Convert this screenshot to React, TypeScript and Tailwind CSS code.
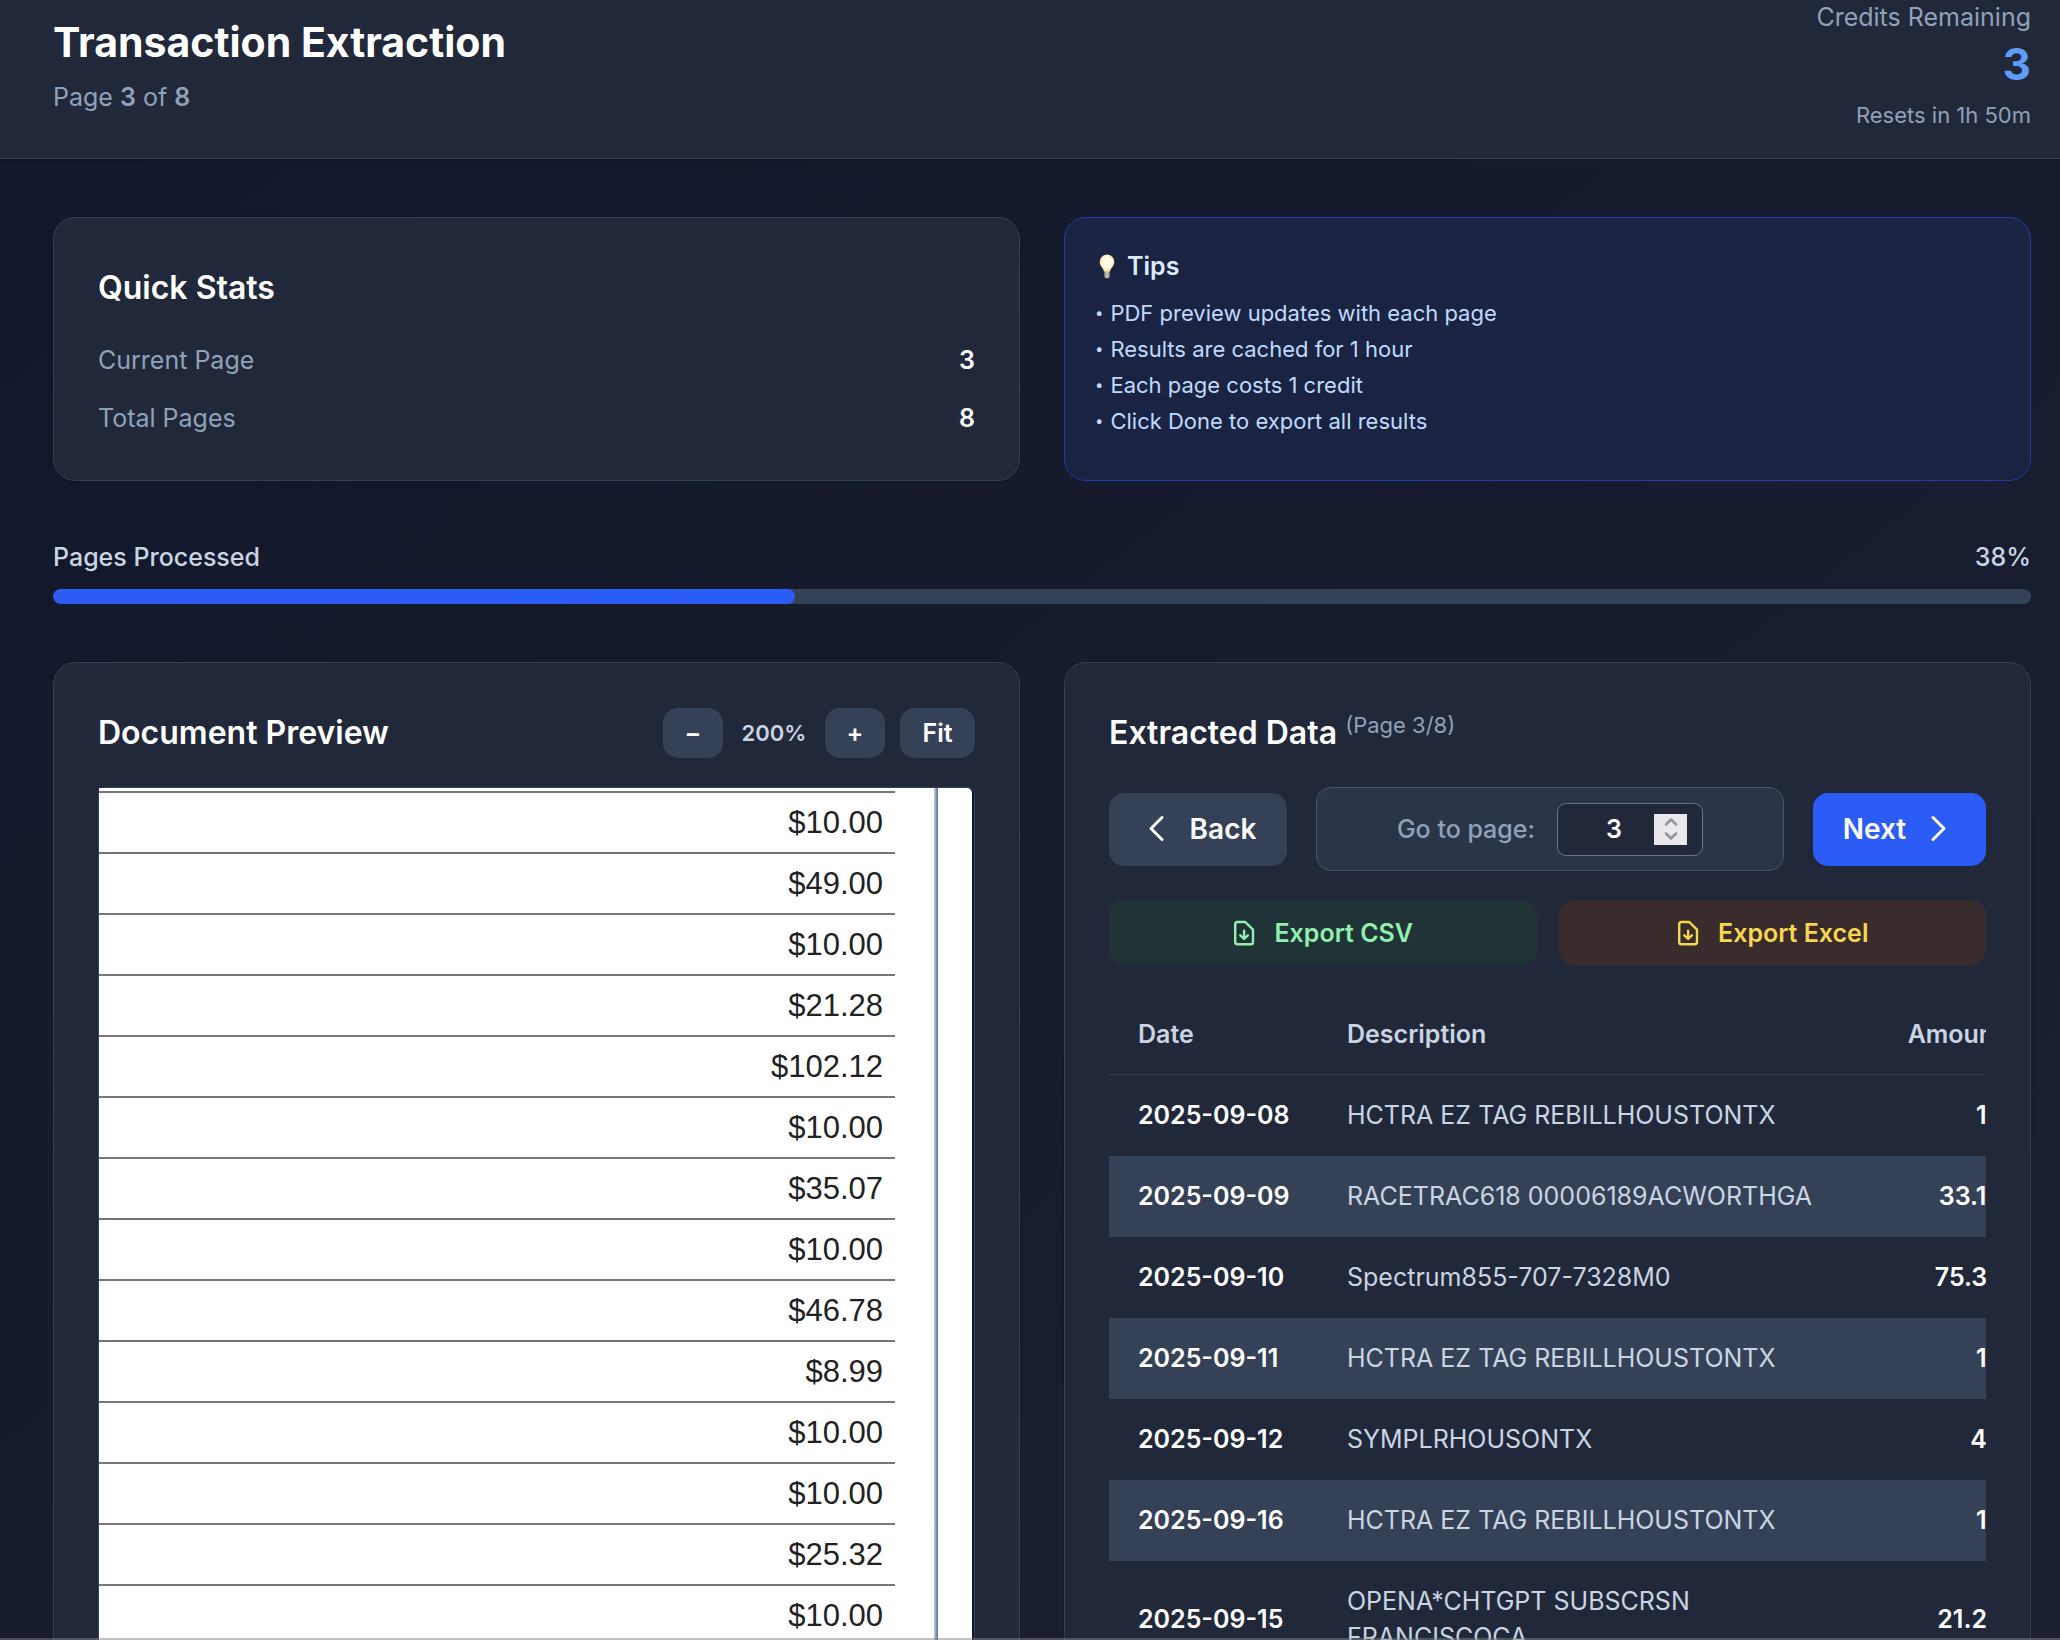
import { ReactNode } from "react";

const amounts = ["$10.00","$49.00","$10.00","$21.28","$102.12","$10.00","$35.07","$10.00","$46.78","$8.99","$10.00","$10.00","$25.32","$10.00"];

const rows = [
  { date: "2025-09-08", description: "HCTRA EZ TAG REBILLHOUSTONTX", amount: "10" },
  { date: "2025-09-09", description: "RACETRAC618 00006189ACWORTHGA", amount: "33.14" },
  { date: "2025-09-10", description: "Spectrum855-707-7328M0", amount: "75.35" },
  { date: "2025-09-11", description: "HCTRA EZ TAG REBILLHOUSTONTX", amount: "10" },
  { date: "2025-09-12", description: "SYMPLRHOUSONTX", amount: "49" },
  { date: "2025-09-16", description: "HCTRA EZ TAG REBILLHOUSTONTX", amount: "10" },
  { date: "2025-09-15", description: "OPENA*CHTGPT SUBSCRSN FRANCISCOCA", amount: "21.28" },
];

const tips = [
  "PDF preview updates with each page",
  "Results are cached for 1 hour",
  "Each page costs 1 credit",
  "Click Done to export all results",
];

function Card({ children }: { children: ReactNode }) {
  return (
    <section className="min-w-0 rounded-[22px] border border-[#314158] bg-[#20283a] p-11 shadow-sm">{children}</section>
  );
}

function Chevron({ flip = false }: { flip?: boolean }) {
  return (
    <svg viewBox="0 0 24 30" className="h-[30px] w-6" fill="none" stroke="currentColor" strokeWidth="3" strokeLinecap="round" strokeLinejoin="round" aria-hidden="true">
      {flip ? <path d="M5 3.500l11 11-11 11" /> : <path d="M18 3.500l-11 11 11 11" />}
    </svg>
  );
}

function FileDown() {
  return (
    <svg viewBox="0 0 24 28" className="h-7 w-6" fill="none" stroke="currentColor" strokeWidth="2.400" strokeLinecap="round" strokeLinejoin="round" aria-hidden="true">
      <path d="M5.500 3h7.800l7.700 7.600V23a2.300 2.300 0 0 1-2.300 2.300H5.500A2.300 2.300 0 0 1 3.200 23V5.300A2.300 2.300 0 0 1 5.500 3z" />
      <path d="M12.100 11.800v8M8.300 16.300l3.800 3.700 3.800-3.700" />
    </svg>
  );
}

function Bulb() {
  return (
    <svg viewBox="0 0 16 25" className="h-[25px] w-4" aria-hidden="true">
      <defs>
        <radialGradient id="glass" cx="0.5" cy="0.45" r="0.6">
          <stop offset="0" stopColor="#fffefa" />
          <stop offset="0.6" stopColor="#fdf6d4" />
          <stop offset="1" stopColor="#ecd27a" />
        </radialGradient>
        <linearGradient id="base" x1="0" x2="1">
          <stop offset="0" stopColor="#77777c" />
          <stop offset="0.5" stopColor="#cfccc0" />
          <stop offset="1" stopColor="#77777c" />
        </linearGradient>
      </defs>
      <path d="M8 .5A7.300 7.300 0 0 0 .7 7.900c0 4.300 3.800 5.600 4.400 10.100h5.800c.6-4.500 4.400-5.800 4.400-10.100A7.300 7.300 0 0 0 8 .5z" fill="url(#glass)" />
      <path d="M5.100 17.500h5.800v4.500c0 1.400-1.300 2.300-2.900 2.300s-2.900-.9-2.900-2.300z" fill="url(#base)" />
    </svg>
  );
}

export default function App() {
  return (
    <div className="relative h-screen overflow-hidden bg-linear-to-br from-[#11172a] to-[#1c2033] font-[Inter,sans-serif] text-[25px] leading-9 text-white">
      <header className="flex h-[159px] items-end justify-between border-b border-[#314158] bg-[#20283a] pr-[29px] pl-[53px] shadow-sm">
        <div className="pb-[43px]">
          <h1 className="text-[41px] leading-[54px] font-bold">Transaction Extraction</h1>
          <p className="mt-[10px] text-[#90a1b9]">Page <strong className="font-semibold">3</strong> of <strong className="font-semibold">8</strong></p>
        </div>
        <div className="pb-7 text-right text-[#90a1b9]">
          <p>Credits Remaining</p>
          <p className="text-[44px] leading-[58px] font-bold text-[#5e9cf8]">3</p>
          <p className="mt-[7px] text-[22px] leading-[30px]">Resets in 1h 50m</p>
        </div>
      </header>

      <main className="pt-[58px] pr-[29px] pl-[53px]">
        <div className="grid grid-cols-2 gap-11">
          <Card>
            <h2 className="text-[32px] leading-[52px] font-semibold">Quick Stats</h2>
            <dl className="mt-7 flex flex-col gap-[22px]">
              <div className="flex justify-between"><dt className="text-[#90a1b9]">Current Page</dt><dd className="font-semibold">3</dd></div>
              <div className="flex justify-between"><dt className="text-[#90a1b9]">Total Pages</dt><dd className="font-semibold">8</dd></div>
            </dl>
          </Card>
          <section className="rounded-[22px] border border-[#2139a8] bg-[#1a2341] px-[30px] py-[30px]">
            <h2 className="flex items-center gap-3 pl-1 font-semibold text-[#dbeafe]"><Bulb />Tips</h2>
            <ul className="mt-[14px] flex flex-col gap-[6px] text-[22px] leading-[30px] text-[#bedbff]">
              {tips.map((t) => <li key={t} className="flex gap-[7px]"><span className="text-[15px]">•</span>{t}</li>)}
            </ul>
          </section>
        </div>

        <section className="mt-[58px]">
          <div className="flex justify-between font-medium text-[#cad5e2]"><span id="progress-label">Pages Processed</span><span>38%</span></div>
          <div role="progressbar" aria-labelledby="progress-label" aria-valuenow={38} className="mt-[14px] h-[15px] overflow-hidden rounded-full bg-[#354157]">
            <div className="h-full w-[37.5%] rounded-full bg-[#2b5cf5]" />
          </div>
        </section>

        <div className="mt-[58px] grid grid-cols-2 gap-11">
          <Card>
            <div className="flex items-center">
              <h2 className="mr-auto text-[32px] leading-[52px] font-semibold">Document Preview</h2>
              <button aria-label="Zoom out" className="h-[50px] w-[60px] rounded-[15px] bg-[#354157] font-semibold">−</button>
              <span className="w-[102px] text-center text-[22px] font-semibold text-[#cad5e2]">200%</span>
              <button aria-label="Zoom in" className="h-[50px] w-[60px] rounded-[15px] bg-[#354157] font-semibold">+</button>
              <button className="ml-[15px] h-[50px] w-[75px] rounded-[15px] bg-[#354157] font-semibold">Fit</button>
            </div>
            <div className="mt-7 rounded-md border border-[#314158] bg-[#12182a] pr-0.5">
              <div className="flex rounded-[5px] bg-white pr-[34px] font-['Liberation_Sans',sans-serif] text-[31px] text-[#222]">
                <ul className="grow border-t-[3px] border-white pr-[39px] text-right">
                  {amounts.map((a, i) => <li key={i} className="h-[61px] border-t-2 border-[#777] pt-3 pr-3">{a}</li>)}
                </ul>
                <div className="w-1 bg-linear-to-r from-[#c3d0dc] to-[#4f7291]" />
              </div>
            </div>
          </Card>

          <Card>
            <h2 className="text-[32px] leading-[52px] font-semibold">Extracted Data <sup className="text-[22px] font-normal text-[#90a1b9]">(Page 3/8)</sup></h2>
            <div className="mt-7 flex items-center gap-[29px]">
              <button className="flex h-[73px] w-[178px] items-center justify-center gap-[22px] rounded-[15px] bg-[#354157] pl-1 text-[28px] font-semibold"><Chevron />Back</button>
              <div className="flex h-[84px] grow items-center justify-center gap-[22px] rounded-[15px] border border-[#45556c] bg-[#2b3548]">
                <label htmlFor="page" className="font-medium text-[#90a1b9]">Go to page:</label>
                <div className="relative">
                  <input id="page" defaultValue="3" className="h-[53px] w-[146px] rounded-[9px] border border-[#62748e] bg-[#20283a] pr-8 text-center font-semibold" />
                  <span className="absolute top-[11px] right-4 grid h-[31px] w-[33px] place-items-center bg-[#e9e8ed]">
                    <svg viewBox="0 0 14 24" className="h-6 w-3.5" fill="none" stroke="#96939f" strokeWidth="2.500" strokeLinecap="round" strokeLinejoin="round" aria-hidden="true"><path d="M2 7.500l5-5 5 5M2 16.500l5 5 5-5" /></svg>
                  </span>
                </div>
              </div>
              <button className="flex h-[73px] w-[173px] items-center justify-center gap-[22px] rounded-[15px] bg-[#2b5cf5] pr-1 text-[28px] font-semibold">Next<Chevron flip /></button>
            </div>
            <div className="mt-[29px] grid grid-cols-2 gap-[22px]">
              <button className="flex h-[65px] items-center justify-center gap-[18px] rounded-[15px] bg-[#203438] font-semibold text-[#93efae]"><FileDown />Export CSV</button>
              <button className="flex h-[65px] items-center justify-center gap-[18px] rounded-[15px] bg-[#382c2d] font-semibold text-[#fad64e]"><FileDown />Export Excel</button>
            </div>
            <div className="mt-[29px] overflow-x-auto">
              <table className="w-[calc(100%+46px)] table-fixed border-collapse text-left">
                <colgroup><col className="w-[209px]" /><col /><col className="w-[157px]" /></colgroup>
                <thead>
                  <tr className="h-20 border-b border-[#314158] text-[#cad5e2]">
                    <th className="px-[29px] font-semibold">Date</th><th className="px-[29px] font-semibold">Description</th><th className="px-[29px] text-right font-semibold">Amount</th>
                  </tr>
                </thead>
                <tbody>
                  {rows.map((r) => (
                    <tr key={r.date} className="border-b border-[#20283a] even:border-[#354157] even:bg-[#354157]">
                      <td className="px-[29px] py-[22px] font-semibold whitespace-nowrap">{r.date}</td>
                      <td className="px-[29px] py-[22px] text-[#cad5e2]">{r.description}</td>
                      <td className="px-[29px] py-[22px] text-right font-semibold">{r.amount}</td>
                    </tr>
                  ))}
                </tbody>
              </table>
            </div>
          </Card>
        </div>
      </main>
      <div className="pointer-events-none absolute inset-x-0 bottom-0 h-0.5 bg-[#80838a]/50" />
    </div>
  );
}
